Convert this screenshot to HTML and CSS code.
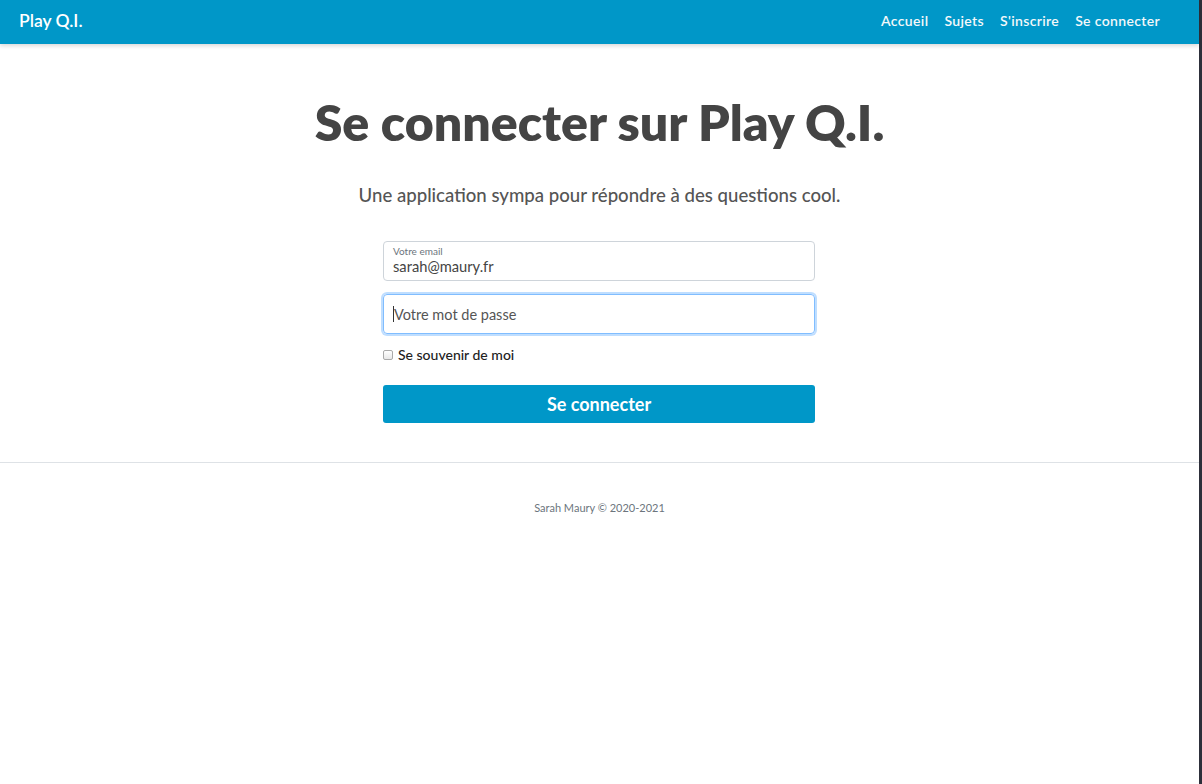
FILE: index.html
```html
<!DOCTYPE html>
<html lang="fr">
<head>
<meta charset="utf-8">
<title>Play Q.I.</title>
<link rel="stylesheet" href="styles.css">
</head>
<body>
<div class="page">
  <header class="navbar">
    <a class="brand" href="#">Play Q.I.</a>
    <nav class="nav">
      <a href="#">Accueil</a>
      <a href="#">Sujets</a>
      <a href="#">S'inscrire</a>
      <a href="#">Se connecter</a>
    </nav>
  </header>
  <main class="main">
    <h1 class="title">Se connecter sur Play Q.I.</h1>
    <p class="lead">Une application sympa pour répondre à des questions cool.</p>
    <form class="form">
      <div class="field filled">
        <label class="float-label">Votre email</label>
        <span class="value">sarah@maury.fr</span>
      </div>
      <div class="field focused">
        <span class="caret"></span><span class="placeholder">Votre mot de passe</span>
      </div>
      <label class="remember"><span class="checkbox"></span>Se souvenir de moi</label>
      <button type="button" class="btn">Se connecter</button>
    </form>
  </main>
  <footer class="footer">Sarah Maury © 2020-2021</footer>
</div>
<div class="scrollbar"></div>
</body>
</html>
```
FILE: styles.css
```css
html, body { margin: 0; padding: 0; height: 100%; }
body {
  display: flex;
  font-family: Lato, "Noto Sans", sans-serif;
  background: #fff;
  color: #444;
}
.page { flex: 1; min-width: 0; display: flex; flex-direction: column; }
.scrollbar { width: 3px; background: #2d2f3a; flex: none; }

.navbar {
  height: 44px;
  box-sizing: border-box;
  background: #0097c8;
  display: flex;
  align-items: center;
  justify-content: space-between;
  padding: 0 39px 4px 19px;
  box-shadow: 0 2px 4px rgba(0,0,0,0.15);
  position: relative;
}
.brand { color: #fff; text-decoration: none; font-size: 17.5px; font-weight: 600; }
.nav { display: flex; gap: 16px; }
.nav a { color: #f4f8fa; text-decoration: none; font-size: 14px; font-weight: 600; letter-spacing: 0.35px; }

.main { display: flex; flex-direction: column; align-items: center; padding-top: 46px; }
.title {
  margin: 0;
  font-size: 50px;
  font-weight: 800;
  line-height: 64px;
  color: #444;
}
.lead { margin: 29px 0 0; font-size: 18.6px; line-height: 24px; color: #555; font-weight: 500; }

.form { width: 432px; display: flex; flex-direction: column; margin: 34px 1px 0 0; }
.field {
  height: 40px;
  box-sizing: border-box;
  border: 1px solid #ced4da;
  border-radius: 4px;
  padding: 0 9px;
  display: flex;
  flex-direction: column;
  justify-content: center;
}
.filled .float-label { font-size: 10px; color: #6c757d; line-height: 12px; margin-top: -2px; }
.filled .value { font-size: 14.7px; color: #444; line-height: 18px; }
.focused {
  margin-top: 13px;
  flex-direction: row;
  justify-content: flex-start;
  align-items: center;
  border-color: #80bdff;
  box-shadow: 0 0 0 2px rgba(0,123,255,0.25);
}
.caret { width: 1px; height: 16px; background: #333; }
.placeholder { font-size: 14.5px; color: #555; }

.remember { display: flex; align-items: center; margin-top: 12px; font-size: 14px; color: #222; font-weight: 500; }
.checkbox {
  width: 8px; height: 8px;
  border: 1px solid #aaa;
  border-radius: 2px;
  background: linear-gradient(#fff, #e8e8e8);
  margin-right: 5px;
}
.btn {
  margin-top: 22px;
  height: 38px;
  border: none;
  border-radius: 3px;
  background: #0097c8;
  color: #fff;
  font-family: inherit;
  font-size: 18px;
  font-weight: 700;
}

.footer {
  margin-top: 39px;
  border-top: 1px solid #dee2e6;
  padding-top: 38px;
  text-align: center;
  font-size: 11px;
  color: #6c757d;
}
```
